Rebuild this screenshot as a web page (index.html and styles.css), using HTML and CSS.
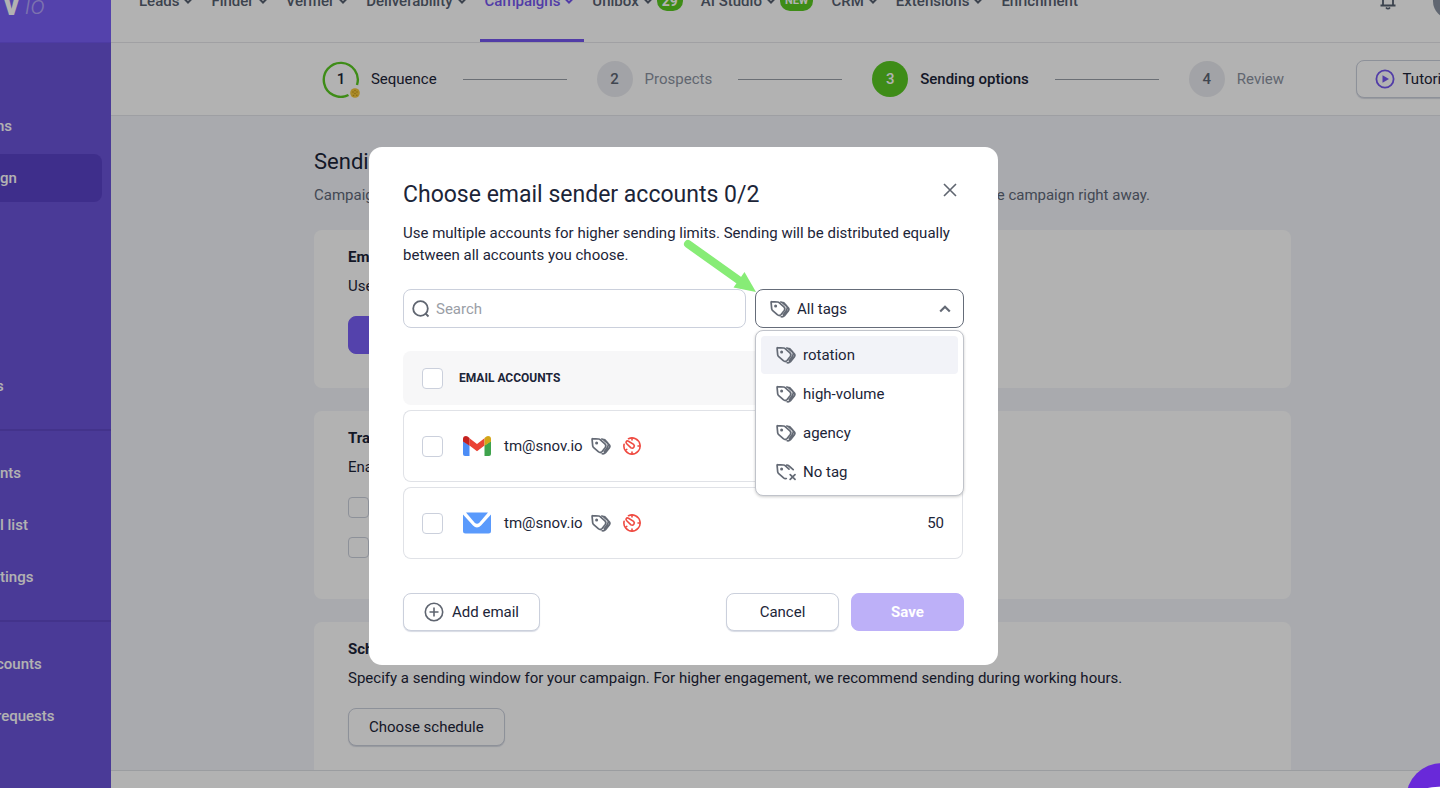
FILE: index.html
```html
<!DOCTYPE html>
<html lang="en">
<head>
<meta charset="utf-8">
<title>Campaign sending options</title>
<link rel="stylesheet" href="styles.css">
</head>
<body>
<svg class="sprite" aria-hidden="true">
  <symbol id="chev" viewBox="0 0 10 10"><path d="M1.500 3 5 6.500 8.500 3" fill="none" stroke="currentColor" stroke-width="2"/></symbol>
  <symbol id="tags" viewBox="0 0 20 18">
    <g fill="none" stroke="currentColor" stroke-width="1.700" stroke-linejoin="round" stroke-linecap="round">
      <path d="M1.700 1.600 7.600 2Q8.600 2.100 9.400 2.800L13.900 6.900Q15.600 8.600 14.300 10.400L11.100 14.500Q9.500 16.300 7.600 14.900L2.700 10.600Q1.900 9.900 1.700 8.800L1.100 2.300Q1 1.500 1.700 1.600Z"/>
      <path d="M10.700 2Q12 2.100 13 3L17.900 7.300Q19.700 9 18.300 10.900L14.500 15.600Q13 17.200 11.200 16.700M13.600 2.700 16.400 5.500Q18 7.500 16.500 10.200L13.300 14.800"/>
    </g>
    <circle cx="5.600" cy="6" r="1.500" fill="currentColor"/>
  </symbol>
  <symbol id="notag" viewBox="0 0 20 18">
    <g fill="none" stroke="currentColor" stroke-width="1.700" stroke-linejoin="round" stroke-linecap="round">
      <path d="M13 6.100 9.400 2.800Q8.600 2.100 7.600 2L1.700 1.600Q1 1.500 1.100 2.300L1.700 8.800Q1.900 9.900 2.700 10.600L7.600 14.900Q8.800 15.900 10.300 15.500M10.700 2Q12 2.100 13 3L17.200 6.600M14.200 11.600 19 16.400M19 11.600 14.200 16.400"/>
    </g>
    <circle cx="5.600" cy="6" r="1.500" fill="currentColor"/>
  </symbol>
  <symbol id="gauge" viewBox="0 0 18 18">
    <g fill="none" stroke="currentColor" stroke-width="1.600" stroke-linecap="round" stroke-linejoin="round">
      <path d="M5.500 1.700A8.100 8.100 0 1 1 1.100 7.200"/>
      <path d="M3.200 4.600Q4 3.400 5.500 4.200L10.600 7.400A2.200 2.200 0 0 1 8 10.900L3.700 6.700Q2.600 5.700 3.200 4.600Z"/>
      <path d="M9 1.200V2.900M16.800 9H15M9 16.800V15M2.700 13.200 3.800 12.400"/>
    </g>
  </symbol>
</svg>

<div class="app">
  <aside class="sidebar">
    <div class="logo"><b>v</b><i>io</i></div>
    <nav class="side-nav" aria-label="Sidebar">
      <div class="side-group side-first">
        <a href="#" class="side-item cut">ns</a>
        <a href="#" class="side-item active">gn</a>
        <a href="#" class="side-item cut far">s</a>
      </div>
      <div class="side-group">
        <a href="#" class="side-item">nts</a>
        <a href="#" class="side-item">l list</a>
        <a href="#" class="side-item">tings</a>
      </div>
      <div class="side-group">
        <a href="#" class="side-item cut">counts</a>
        <a href="#" class="side-item cut">requests</a>
      </div>
    </nav>
  </aside>

  <div class="page">
    <header class="topbar">
      <nav class="top-nav" aria-label="Main">
        <a href="#">Leads<svg><use href="#chev"/></svg></a>
        <a href="#">Finder<svg><use href="#chev"/></svg></a>
        <a href="#">Verifier<svg><use href="#chev"/></svg></a>
        <a href="#">Deliverability<svg><use href="#chev"/></svg></a>
        <a href="#" class="current">Campaigns<svg><use href="#chev"/></svg></a>
        <a href="#">Unibox<svg><use href="#chev"/></svg><span class="badge">29</span></a>
        <a href="#">AI Studio<svg><use href="#chev"/></svg><span class="badge new">NEW</span></a>
        <a href="#">CRM<svg><use href="#chev"/></svg></a>
        <a href="#">Extensions<svg><use href="#chev"/></svg></a>
        <a href="#">Enrichment</a>
      </nav>
      <div class="user">
        <button class="bell" aria-label="Notifications"><svg viewBox="0 0 16 20"><path d="M3 15V8a5 5 0 0 1 10 0v7M.500 15.500h15M6 17.500q2 2.400 4 0" fill="none" stroke="currentColor" stroke-width="1.800"/></svg></button>
        <span class="avatar"></span>
      </div>
    </header>

    <div class="steps-bar">
      <ol class="steps">
        <li class="done"><span class="num"><svg viewBox="0 0 38 38"><path d="M26.500 35A17 17 0 1 1 35 25" fill="none" stroke="#59c921" stroke-width="2.400"/><circle cx="33" cy="33" r="4.800" fill="#f5c73c"/><g fill="#c79a1c"><circle cx="31" cy="32" r=".8"/><circle cx="35" cy="32" r=".8"/><circle cx="33" cy="30.500" r=".8"/><circle cx="33" cy="33.500" r=".8"/><circle cx="31.500" cy="35.500" r=".8"/><circle cx="34.800" cy="35.300" r=".8"/></g></svg><b>1</b></span>Sequence</li>
        <li><span class="num">2</span>Prospects</li>
        <li class="now"><span class="num">3</span>Sending options</li>
        <li><span class="num">4</span>Review</li>
      </ol>
      <button class="btn tutorial"><svg viewBox="0 0 20 20"><circle cx="10" cy="10" r="8.600" fill="none" stroke="#7557f0" stroke-width="1.800"/><path d="M7.500 6.200 14 10 7.500 13.800Z" fill="#7557f0"/></svg>Tutorial</button>
    </div>

    <main class="content">
      <h1>Sending options</h1>
      <p class="lead"><span>Campaign</span><span>the campaign right away.</span></p>
      <section class="card">
        <h2>Email</h2>
        <p>Use</p>
        <button class="btn primary">Add</button>
      </section>
      <section class="card">
        <h2>Track</h2>
        <p>Enable</p>
        <div class="checks">
          <input type="checkbox" aria-label="Track opens">
          <input type="checkbox" aria-label="Track clicks">
        </div>
      </section>
      <section class="card last">
        <h2>Schedule</h2>
        <p>Specify a sending window for your campaign. For higher engagement, we recommend sending during working hours.</p>
        <button class="btn">Choose schedule</button>
      </section>
    </main>
    <footer class="bottom-bar"></footer>
  </div>
</div>

<div class="overlay">
  <div class="modal" role="dialog" aria-labelledby="dlg-title">
    <div class="modal-head">
      <h2 id="dlg-title">Choose email sender accounts 0/2</h2>
      <button class="close" aria-label="Close"><svg viewBox="0 0 14 14"><path d="M1 1 13 13M13 1 1 13" stroke="currentColor" stroke-width="1.600"/></svg></button>
    </div>
    <p class="desc">Use multiple accounts for higher sending limits. Sending will be distributed equally between all accounts you choose.</p>

    <div class="filters">
      <label class="search">
        <svg viewBox="0 0 18 18"><circle cx="8.500" cy="8.500" r="7.300" fill="none" stroke="currentColor" stroke-width="1.800"/><path d="M13.500 13.500 16.500 16.500" stroke="currentColor" stroke-width="1.800"/></svg>
        <input type="text" placeholder="Search" aria-label="Search">
      </label>
      <div class="tag-filter">
        <svg class="tag"><use href="#tags"/></svg>
        <select aria-label="Filter by tag"><option>All tags</option></select>
        <svg class="caret" viewBox="0 0 12 8"><path d="M1.200 6.500 6 1.800 10.800 6.500" fill="none" stroke="currentColor" stroke-width="2.200"/></svg>
        <ul class="menu">
          <li class="hover"><svg class="tag"><use href="#tags"/></svg>rotation</li>
          <li><svg class="tag"><use href="#tags"/></svg>high-volume</li>
          <li><svg class="tag"><use href="#tags"/></svg>agency</li>
          <li><svg class="tag"><use href="#notag"/></svg>No tag</li>
        </ul>
        <svg class="arrow" viewBox="0 0 76 56"><path d="M8 8 60 45" stroke="#87ec76" stroke-width="8" stroke-linecap="round"/><path d="M64.500 36 76 56 53.500 51.500Z" fill="#87ec76"/></svg>
      </div>
    </div>

    <table class="accounts">
      <thead>
        <tr><th class="pick"><input type="checkbox" aria-label="Select all"></th><th>EMAIL ACCOUNTS</th><th></th></tr>
      </thead>
      <tbody>
        <tr>
          <td class="pick"><input type="checkbox" aria-label="Select Gmail account"></td>
          <td><div class="account">
            <svg class="provider" viewBox="0 0 28 22"><path d="M0 6 6.500 10.500V21H2Q0 21 0 19Z" fill="#4c8df6"/><path d="M28 6 21.500 10.500V21H26Q28 21 28 19Z" fill="#3fa34d"/><path d="M6.500 3.200 14 9 21.500 3.200V10.500L14 16.200 6.500 10.500Z" fill="#ea4335"/><path d="M0 4Q0 1 3 1 4.500 1 6.500 3V10.700L0 6.400Z" fill="#c5221f"/><path d="M28 4Q28 1 25 1 23.500 1 21.500 3V10.700L28 6.400Z" fill="#d3a518"/></svg>
            <span>tm@snov.io</span>
            <svg class="tag"><use href="#tags"/></svg><svg class="gauge"><use href="#gauge"/></svg></div></td>
          <td class="limit"></td>
        </tr>
        <tr>
          <td class="pick"><input type="checkbox" aria-label="Select mail account"></td>
          <td><div class="account">
            <svg class="provider" viewBox="0 0 28 22"><path d="M0 2.500V19Q0 21.500 2.500 21.500H25.500Q28 21.500 28 19V2.500L18 13.500Q14 17.500 10 13.500Z" fill="#5a9afc"/><path d="M3 .5H25L16.500 10.500Q14 13.200 11.500 10.500Z" fill="#5a9afc"/></svg>
            <span>tm@snov.io</span>
            <svg class="tag"><use href="#tags"/></svg><svg class="gauge"><use href="#gauge"/></svg></div></td>
          <td class="limit">50</td>
        </tr>
      </tbody>
    </table>

    <div class="actions">
      <button class="btn add"><svg viewBox="0 0 20 20"><path d="M10 5.500V14.500M5.500 10H14.500" stroke="currentColor" stroke-width="1.600"/><circle cx="10" cy="10" r="8.700" fill="none" stroke="currentColor" stroke-width="1.600"/></svg>Add email</button>
      <button class="btn wide">Cancel</button>
      <button class="btn wide save">Save</button>
    </div>
  </div>
</div>
<button class="chat" aria-label="Open chat"><svg viewBox="0 0 72 72"><path d="M16 26Q36 21 56 26V50H16Z" fill="#fff"/></svg></button>
</body>
</html>
```

FILE: styles.css
```css
* { box-sizing: border-box; }
body {
  margin: 0;
  font: 15px/20px Roboto, "Liberation Sans", sans-serif;
  color: #1c2538;
  background: #f2f4f9;
  overflow: hidden;
}
h1, h2, p, ul, ol { margin: 0; padding: 0; }
ul, ol { list-style: none; }
a { color: inherit; text-decoration: none; }
button, input, select { font: inherit; color: inherit; }
svg { display: block; flex: none; }
.sprite { position: absolute; width: 0; height: 0; }

.app { display: flex; height: 100vh; overflow: hidden; }

.sidebar { flex: none; width: 111px; background: #6b53d8; color: #fff; overflow: hidden; }
.logo {
  display: flex; align-items: flex-end; gap: 6px;
  height: 43px; padding: 0 0 25px 4px;
  background: #795ff7; border-bottom: 1px solid #6f55ea;
}
.logo b { font-size: 29px; line-height: 24px; font-weight: 900; }
.logo i { font-size: 26px; line-height: 24px; font-weight: 300; color: #b3a5fa; }
.side-first { padding-top: 59px; }
.side-group { display: flex; flex-direction: column; gap: 4px; padding-bottom: 19px; padding-right: 9px; }
.side-group + .side-group { border-top: 2px solid #6049c8; padding-top: 18px; }
.side-item { display: flex; align-items: center; height: 48px; font-weight: 500; border-radius: 0 8px 8px 0; }
.side-item.active { background: #5a42c8; }
.side-item.cut { margin-left: -4px; }
.side-item.far { margin-top: 156px; }

/* The page column is wider than the window and runs past its right edge. */
.page { flex: 1 0 auto; width: calc(100% - 57px); display: flex; flex-direction: column; height: 100vh; }
.topbar { position: relative; display: flex; height: 43px; background: #fff; border-bottom: 1px solid #e5e6ea; flex: none; overflow: hidden; }
.top-nav { display: flex; gap: 18px; margin-top: -9px; padding-left: 28px; font-weight: 500; color: #566070; }
.top-nav a { display: flex; align-items: flex-start; gap: 4px; }
.top-nav svg { width: 10px; height: 10px; margin-top: 5px; }
.top-nav .current { color: #7557f0; border-bottom: 3px solid #7557f0; border-radius: 2px 2px 0 0; margin: 0 -10px 0 -5px; padding: 0 10px 0 5px; }
.badge { height: 20px; padding: 0 5px; border-radius: 10px; background: #59c921; color: #fff; font-size: 14px; font-weight: 700; }
.badge.new { font-size: 11px; padding: 0 5px; }
.user { display: flex; gap: 37px; margin-left: auto; padding-right: 25px; }
.bell { border: 0; background: none; padding: 0; width: 16px; height: 20px; margin-top: -10px; color: #566070; }
.bell svg { width: 16px; height: 20px; }
.avatar { width: 36px; height: 36px; margin-top: -17px; border-radius: 50%; background: #8a93a2; }

.steps-bar { position: relative; display: flex; justify-content: center; align-items: center; height: 73px; padding-left: 2px; flex: none; background: #fff; border-bottom: 1px solid #e2e4ea; }
.steps { display: flex; color: #8b93a1; }
.steps li { display: flex; align-items: center; gap: 12px; }
.steps li + li::before { content: ""; width: 104px; height: 1px; background: #9a9fa8; margin: 0 18px 0 26px; }
.num { position: relative; display: grid; place-items: center; width: 36px; height: 36px; border-radius: 50%; background: #e9eaef; color: #5c6573; font-weight: 500; }
.num b { font-weight: 500; }
.num svg { position: absolute; inset: -1px; width: 38px; height: 38px; }
.done, .done .num { color: #1c2538; }
.done .num { background: none; }
.now { color: #1c2538; font-weight: 500; }
.now .num { background: #59c921; color: #fff; }

.btn {
  display: inline-flex; align-items: center; justify-content: center; gap: 8px;
  height: 38px; padding: 0 20px; border: 1px solid #cbd0dc; border-radius: 8px;
  background: #fff; box-shadow: 0 1px 1px #d8dbe4;
}
.btn svg { width: 20px; height: 20px; }
.tutorial { position: absolute; right: 22px; top: 17px; padding: 0 18px; }

.content { flex: 1; min-height: 0; overflow: hidden; width: 977px; margin: 0 auto; padding-top: 31px; }
h1 { font-size: 22px; line-height: 30px; font-weight: 400; }
.lead { display: flex; justify-content: space-between; width: 836px; margin: 8px 0 25px; color: #606878; }
.card { background: #fff; border-radius: 8px; padding: 16px 34px 34px; margin-bottom: 23px; }
.card h2 { font-size: 15px; line-height: 22px; font-weight: 700; margin-bottom: 8px; }
.card .btn { margin-top: 20px; display: flex; }
.card .primary { background: #795ff7; border-color: #795ff7; color: #fff; box-shadow: none; }
.checks { display: flex; flex-direction: column; gap: 19px; margin-top: 20px; padding-bottom: 7px; }
.bottom-bar { flex: none; height: 18px; background: #fff; border-top: 1px solid #dfe1e6; }

input[type="checkbox"] { appearance: none; display: block; width: 21px; height: 21px; margin: 0; border: 1px solid #cbd0dc; border-radius: 4px; background: #fff; }

.overlay { position: fixed; inset: 0; display: flex; align-items: center; justify-content: center; padding: 24px 73px 0 0; background: rgba(0, 0, 0, .3); }
.modal { width: 629px; padding: 33px 34px 34px; background: #fff; border-radius: 13px; }
.modal-head { display: flex; justify-content: space-between; align-items: flex-start; }
.modal-head h2 { font-size: 23px; line-height: 30px; font-weight: 400; }
.close { margin: 3px 7px 0 0; padding: 0; border: 0; background: none; color: #5f6570; }
.close svg { width: 14px; height: 14px; }
.desc { margin: 12px 0 23px; line-height: 22px; }

.filters { display: grid; grid-template-columns: 1fr 209px; gap: 9px; margin-bottom: 23px; }
.search { display: flex; align-items: center; gap: 6px; height: 39px; padding: 0 8px; border: 1px solid #cbd0dc; border-radius: 8px; color: #5f6570; }
.search svg { width: 18px; height: 18px; }
.search input { flex: 1; min-width: 0; border: 0; padding: 0; outline: 0; background: none; }
.search input::placeholder { color: #9a9ea6; }
.tag-filter { position: relative; }
.tag-filter select { appearance: none; display: block; width: 100%; height: 39px; padding: 0 36px 0 41px; border: 1px solid #656c79; border-radius: 8px; background: #fff; }
.tag { width: 20px; height: 18px; color: #646a75; }
.tag-filter > .tag { position: absolute; left: 15px; top: 11px; }
.caret { position: absolute; right: 13px; top: 16px; width: 12px; height: 8px; color: #646a75; }
.menu { position: absolute; left: 0; top: 41px; width: 100%; padding: 5px 5px 4px; background: #fff; border: 1px solid #c0c3ca; border-radius: 8px; box-shadow: 0 1px 3px rgba(0, 0, 0, .2); }
.menu li { display: flex; align-items: center; gap: 7px; height: 38px; padding-left: 15px; border-radius: 4px; }
.menu li + li { margin-top: 1px; }
.menu .hover { background: #f2f3f8; }
.arrow { position: absolute; right: 208px; bottom: 36px; width: 76px; height: 56px; }

.accounts { width: 560px; border-collapse: separate; border-spacing: 0 5px; margin: -5px 0 29px; }
.accounts th { height: 54px; padding: 0; background: #f7f7f8; text-align: left; font-size: 12px; font-weight: 700; }
.accounts td { height: 72px; padding: 0; border: solid #e0e2e7; border-width: 1px 0; }
.accounts .pick { width: 56px; padding-left: 18px; }
.accounts th.pick { padding-left: 19px; }
.accounts th:first-child, .accounts td:first-child { border-radius: 8px 0 0 8px; }
.accounts th:last-child, .accounts td:last-child { border-radius: 0 8px 8px 0; }
.accounts td:first-child { border-left-width: 1px; }
.accounts td:last-child { border-right-width: 1px; }
.account { display: flex; align-items: center; padding-left: 4px; }
.provider { width: 28px; height: 22px; margin-right: 13px; }
.account .tag { margin: 0 12px 0 8px; }
.gauge { width: 18px; height: 18px; color: #ef4b42; }
.limit { text-align: right; }
.accounts .limit { padding-right: 18px; }

.actions { display: flex; gap: 12px; }
.actions .add { margin-right: auto; }
.add svg { color: #5f6570; }
.actions .wide { width: 113px; }
.actions .save { background: #bdb0f8; border-color: #bdb0f8; color: #fff; font-weight: 700; box-shadow: none; }

.chat { position: fixed; right: -38px; bottom: -47px; width: 72px; height: 72px; padding: 0; border: 0; border-radius: 50%; background: #6929d9; }
.chat svg { width: 72px; height: 72px; }
```
